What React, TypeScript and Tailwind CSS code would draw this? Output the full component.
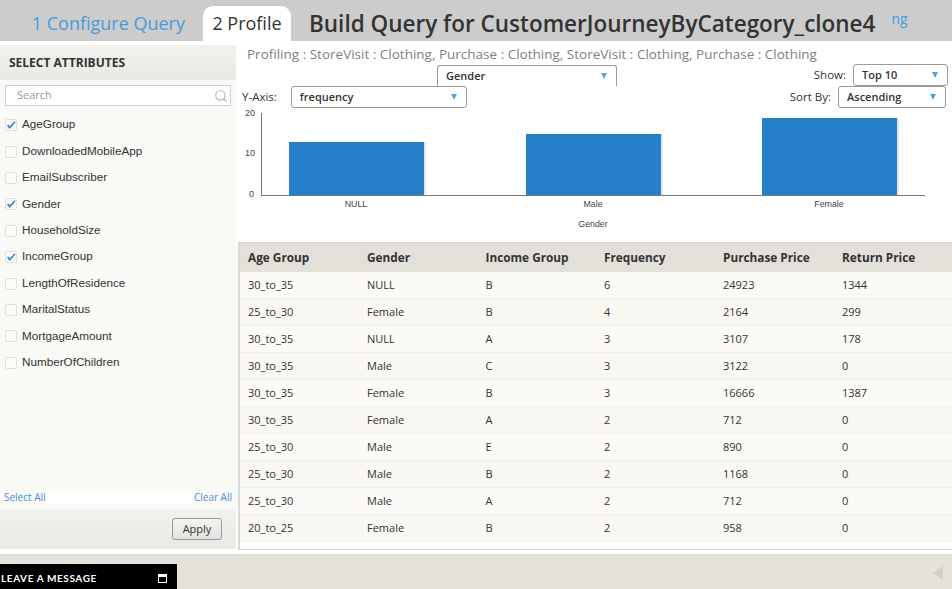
import React from "react";
import { Search } from "lucide-react";

const attributes = [
  { name: "AgeGroup", checked: true },
  { name: "DownloadedMobileApp", checked: false },
  { name: "EmailSubscriber", checked: false },
  { name: "Gender", checked: true },
  { name: "HouseholdSize", checked: false },
  { name: "IncomeGroup", checked: true },
  { name: "LengthOfResidence", checked: false },
  { name: "MaritalStatus", checked: false },
  { name: "MortgageAmount", checked: false },
  { name: "NumberOfChildren", checked: false },
];

const columns = ["Age Group", "Gender", "Income Group", "Frequency", "Purchase Price", "Return Price"];

const rows = [
  ["30_to_35", "NULL", "B", "6", "24923", "1344"],
  ["25_to_30", "Female", "B", "4", "2164", "299"],
  ["30_to_35", "NULL", "A", "3", "3107", "178"],
  ["30_to_35", "Male", "C", "3", "3122", "0"],
  ["30_to_35", "Female", "B", "3", "16666", "1387"],
  ["30_to_35", "Female", "A", "2", "712", "0"],
  ["25_to_30", "Male", "E", "2", "890", "0"],
  ["25_to_30", "Male", "B", "2", "1168", "0"],
  ["25_to_30", "Male", "A", "2", "712", "0"],
  ["20_to_25", "Female", "B", "2", "958", "0"],
];

const Dropdown = ({ label, className }: { label: string; className: string }) => (
  <div
    className={`flex items-center justify-between rounded-[3px] border border-[#9a9a9a] bg-white pl-2 pr-[9px] text-[11px] font-semibold text-[#333] ${className}`}
  >
    <span>{label}</span>
    <span className="h-0 w-0 border-x-[3.5px] border-t-[6px] border-x-transparent border-t-[#4aa5ea]" />
  </div>
);

const Chart = () => (
  <svg width="714" height="134" viewBox="0 0 714 134" className="block">
    <g fontFamily="Liberation Sans, sans-serif" fontSize="8.8" fill="#444">
      <text x="7" y="8" fontSize="9">20</text>
      <text x="7" y="48" fontSize="9">10</text>
      <text x="11" y="89" fontSize="9">0</text>
      <text x="118" y="99" textAnchor="middle">NULL</text>
      <text x="355" y="99" textAnchor="middle">Male</text>
      <text x="591" y="99" textAnchor="middle">Female</text>
      <text x="355" y="119" textAnchor="middle">Gender</text>
    </g>
    <rect x="51" y="34" width="135" height="53" fill="#2680c9" />
    <rect x="288" y="26" width="135" height="61" fill="#2680c9" />
    <rect x="524" y="10" width="135" height="77" fill="#2680c9" />
    <rect x="186" y="34" width="2" height="53" fill="#e8e8e8" />
    <rect x="423" y="26" width="2" height="61" fill="#e8e8e8" />
    <rect x="659" y="10" width="2" height="77" fill="#e8e8e8" />
    <path d="M23.5 5V87.5H687" fill="none" stroke="#777" />
  </svg>
);

export default function App() {
  return (
    <div className="flex h-[589px] w-[952px] flex-col overflow-hidden bg-white font-['Open_Sans',sans-serif]">
      <header className="flex h-[41px] shrink-0 items-end bg-[#cccccc]">
        <div className="flex h-[35px] w-[203px] items-center justify-end pr-[18px] text-[18px] text-[#4a9ad8]">
          1 Configure Query
        </div>
        <div className="flex h-[35px] w-[88px] items-center justify-center rounded-t-[10px] bg-white text-[18px] text-[#333]">
          2 Profile
        </div>
        <h1 className="ml-[18px] flex h-[41px] items-center whitespace-nowrap pt-[8px] text-[22.5px] font-semibold leading-none text-[#333]">
          Build Query for CustomerJourneyByCategory_clone4
        </h1>
        <span className="mb-[15px] ml-[16px] text-[14px] leading-none text-[#4a9ad8]">ng</span>
      </header>

      <main className="flex min-h-0 flex-1">
        <aside className="mt-1 flex h-[504px] w-[236px] shrink-0 flex-col bg-[#f9f9f6]">
          <div className="flex h-[35px] shrink-0 items-center bg-gradient-to-b from-[#f1f1ee] to-[#e8e8e4] pl-[9px] text-[12px] font-bold text-[#333]">
            SELECT ATTRIBUTES
          </div>
          <div className="mx-[5px] mt-[5px] flex h-[21px] items-center justify-between border border-[#cfcfcf] bg-white pl-[11px] pr-[2px] text-[11px] text-[#999]">
            <span>Search</span>
            <Search size={14} strokeWidth={2} className="text-[#b5b5b5]" />
          </div>
          <ul className="mt-[5px] flex flex-col font-['Liberation_Sans',sans-serif] text-[11.7px] text-[#333]">
            {attributes.map((attribute) => (
              <li key={attribute.name} className="flex h-[26.4px] items-center pl-[5px]">
                <span className="mr-[5px] mt-[2px] flex h-[12px] w-[12px] items-center justify-center rounded-[2px] border border-[#e0dfda] bg-[#fdfbf7]">
                  {attribute.checked && (
                    <svg width="11" height="10" viewBox="0 0 11 10">
                      <path d="M1 5.5L2.5 4.5L4 6.5L9.5 1L10.5 2L4 9.5Z" fill="#2b86d0" />
                    </svg>
                  )}
                </span>
                {attribute.name}
              </li>
            ))}
          </ul>
          <div className="mt-auto flex h-[13px] items-center justify-between bg-white text-[10px] text-[#4a90d9]">
            <span className="bg-[#f9f9f6] pl-[4px]">Select All</span>
            <span className="bg-[#f9f9f6] pr-[4px]">Clear All</span>
          </div>
          <div className="mt-[5px] flex h-[40px] shrink-0 items-center justify-end bg-gradient-to-b from-[#f1f1ee] to-[#e8e8e4] pr-[14px]">
            <button className="h-[22px] w-[50px] rounded-[3px] border border-[#9a9a9a] bg-gradient-to-b from-[#f4f4f2] to-[#e2e2df] text-[11px] text-[#333]">
              Apply
            </button>
          </div>
        </aside>

        <section className="ml-[2px] flex h-[509px] min-w-0 flex-1 flex-col">
          <p className="pl-[9px] pt-[4px] pb-[1px] text-[13.5px] leading-[18px] text-[#808080]">
            Profiling : StoreVisit : Clothing, Purchase : Clothing, StoreVisit : Clothing, Purchase : Clothing
          </p>
          <div className="flex h-[44px] flex-col text-[11px] text-[#333]">
            <div className="flex h-[22px] items-start pl-[199px]">
              <Dropdown label="Gender" className="mt-[1px] h-[21px] w-[180px] rounded-b-none border-b-0" />
              <div className="ml-auto mr-[4px] flex items-center gap-[7px]">
                <span className="text-[11.5px]">Show:</span>
                <Dropdown label="Top 10" className="h-[22px] w-[95px]" />
              </div>
            </div>
            <div className="flex items-center pl-[4px]">
              <span className="text-[11.5px]">Y-Axis:</span>
              <Dropdown label="frequency" className="ml-[14px] h-[22px] w-[176px]" />
              <div className="ml-auto mr-[6px] flex items-center gap-[7px]">
                <span className="text-[11.5px]">Sort By:</span>
                <Dropdown label="Ascending" className="h-[22px] w-[108px]" />
              </div>
            </div>
          </div>
          <Chart />
          <div className="flex min-h-0 flex-1 flex-col border-y border-l-2 border-[#d8d8d8]">
            <div className="grid h-[29px] shrink-0 grid-cols-[119px_118.5px_118.5px_119px_119px_1fr] items-center bg-[#e3e0d9] pl-2 text-[11.8px] font-bold text-[#333]">
              {columns.map((column) => (
                <span key={column}>{column}</span>
              ))}
            </div>
            {rows.map((row, index) => (
              <div
                key={index}
                className={`grid h-[27px] shrink-0 grid-cols-[119px_118.5px_118.5px_119px_119px_1fr] items-center border-b border-[#f0eee8] pl-2 text-[11px] text-[#333] ${
                  index % 2 === 0 ? "bg-[#fbfaf6]" : "bg-[#f9f7f1]"
                }`}
              >
                {row.map((cell, cellIndex) => (
                  <span key={cellIndex}>{cell}</span>
                ))}
              </div>
            ))}
          </div>
        </section>
      </main>

      <footer className="mt-1 flex h-[35px] shrink-0 items-end justify-between bg-[#e5e2dc]">
        <div className="flex h-[25px] w-[177px] items-center justify-between bg-black pl-[1px] pr-[10px] pt-[3px] font-['Lato',sans-serif] text-[10px] font-bold tracking-[0.6px] text-white">
          LEAVE A MESSAGE
          <span className="h-[9px] w-[9px] border border-t-[3px] border-white" />
        </div>
        <span className="mb-[9px] mr-[9px] h-0 w-0 border-y-[7px] border-r-[10px] border-y-transparent border-r-[#d2cfc9]" />
      </footer>
    </div>
  );
}
